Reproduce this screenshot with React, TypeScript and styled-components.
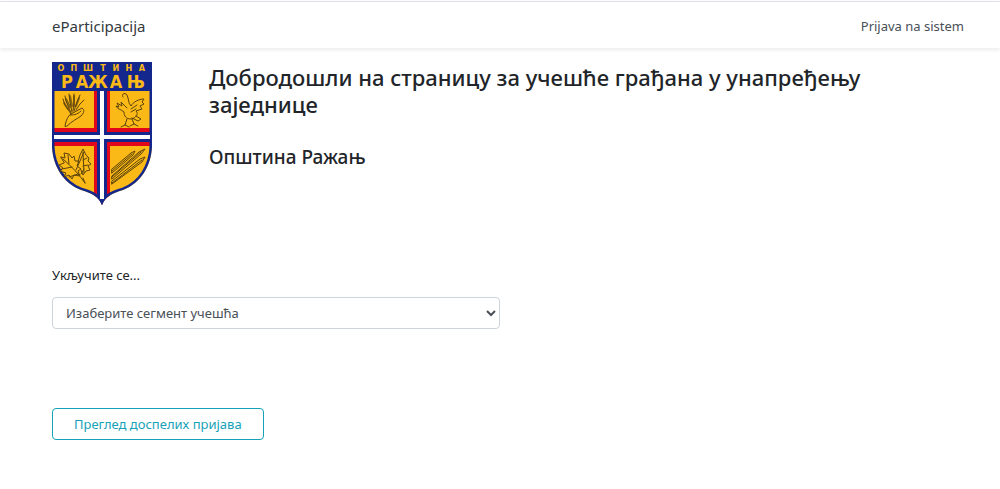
import React from "react";
import styled, { createGlobalStyle } from "styled-components";

const GlobalStyle = createGlobalStyle`
  *, *::before, *::after { box-sizing: border-box; }
  body {
    margin: 0;
    background: #fff;
    color: #212529;
    font-family: "Noto Sans", "Open Sans", sans-serif;
    font-size: 13px;
    line-height: 20px;
  }
`;

const Navbar = styled.header`
  display: flex;
  align-items: center;
  justify-content: space-between;
  height: 47px;
  margin-top: 1px;
  padding: 2px 36px 0 52px;
  border-top: 1px solid #dee2e6;
  box-shadow: 0 2px 4px rgba(0, 0, 0, 0.08);
`;

const Brand = styled.a`
  color: #343a40;
  font-size: 15px;
  text-decoration: none;
`;

const NavLink = styled.a`
  color: #495057;
  text-decoration: none;
`;

const Main = styled.main`
  padding: 14px 52px 48px;
`;

const Intro = styled.section`
  display: grid;
  grid-template-columns: 100px minmax(0, 680px);
  column-gap: 57px;
`;

const Crest = styled.svg`
  display: block;
  width: 100px;
  height: 144px;
`;

const Title = styled.h1`
  margin: 2px 0 28px;
  font-size: 22px;
  font-weight: 500;
  line-height: 27px;
`;

const Subtitle = styled.h2`
  margin: 0;
  font-size: 19px;
  font-weight: 500;
  line-height: 22px;
`;

const Form = styled.form`
  display: flex;
  flex-direction: column;
  align-items: flex-start;
  margin-top: 59px;
`;

const Label = styled.label`
  margin-bottom: 12px;
`;

const Select = styled.select`
  width: 50%;
  height: 32px;
  padding: 0 9px;
  border: 1px solid #ced4da;
  border-radius: 4px;
  background: #fff;
  color: #495057;
  font: inherit;
`;

const OutlineButton = styled.button`
  height: 32px;
  margin-top: 79px;
  padding: 0 21px;
  border: 1px solid #17a2b8;
  border-radius: 4px;
  background: transparent;
  color: #17a2b8;
  font: inherit;
`;

const shield =
  "M0 0H100V85C99 104 89 121 71 128C62 131 54 133 50 143C46 133 38 131 29 128C11 121 1 104 0 85Z";

function CoatOfArms() {
  return (
    <Crest viewBox="0 0 100 144" role="img" aria-label="Грб општине Ражањ">
      <clipPath id="shield">
        <path d={shield} />
      </clipPath>
      <g clipPath="url(#shield)">
        <path fill="#fbb917" d="M0 0H100V144H0Z" />
        <path fill="#e2061a" d="M42 28H58V144H42ZM0 66H100V84H0Z" />
        <path fill="#14278c" d="M45 28H55V144H45ZM0 70H100V80H0ZM0 0H100V29H0Z" />
        <path d={shield} fill="none" stroke="#14278c" strokeWidth="5" />
        <path fill="#fff" d="M48 29H52V137H48ZM2 73H98V77H2Z" />
      </g>
      <g fill="#fbb917" fontFamily="Liberation Sans Narrow, DejaVu Sans Condensed, sans-serif" fontWeight="700" textAnchor="middle">
        <text fontSize="9" x="9 22 36 51 64 77 90" y="9">ОПШТИНА</text>
        <text fontSize="18" x="15 30 46 64 84" y="26">РАЖАЊ</text>
      </g>
      <g fill="none" stroke="#5b430b" strokeWidth="1" strokeLinecap="round" strokeLinejoin="round">
        {/* Wheat sheaf */}
        <path d="M13 64C14 58 16 54 19 52L30 46C33 48 32 51 29 54C25 57 20 59 15 64ZM18 53C21 53 25 53 29 49M19 52L13 43L11 37M19 51L14 39L13 34M20 50L18 40L17 32M21 49L22 40L22 32M22 49L25 40L28 33M24 48L28 42L32 38" />
        <path strokeWidth="2" opacity="0.7" d="M12 41L16 47M14 37L18 45M18 34L20 44M22 34L22 44M27 36L24 44" />
        {/* Bird */}
        <path d="M71 35C69 32 73 30 75 33C77 37 76 41 79 44C81 40 87 37 92 37L90 40L92 42L88 44L90 47L84 49C87 52 84 56 79 57C74 57 72 54 72 50C69 47 66 48 64 44L67 45L65 41L70 44L69 40L75 46M75 57L73 63L69 65M73 63L77 65M80 57L82 62L86 64M82 62L78 64M84 54L89 57L86 59L80 56M79 47L85 43M79 50L84 47" />
        {/* Leaves */}
        <path d="M33 121C27 112 20 105 11 97M24 108L32 90M20 105L10 107M17 102L16 93M26 112L17 115M29 112L32 107M33 121L31 116M9 95L13 96L12 91L17 92L20 96L22 94L23 99L27 99L25 104L29 107L26 109L28 114L22 113L20 117L17 113L12 115L14 111L8 109L11 106L7 103L12 101ZM26 100L28 93L31 87L34 93L37 96L36 99L39 102L36 104L38 108L34 109L31 113L29 108M31 90L32 111M31 98L35 96M31 104L36 103" />
        {/* Awls */}
        <path d="M60 107L79 91L83 89L81 93L60 111ZM60 114L87 90L93 87L89 92L60 117ZM60 119L88 97L93 95L90 100L60 122ZM60 109L80 92M60 115L89 90M60 121L90 98" />
      </g>
    </Crest>
  );
}

export default function App() {
  return (
    <>
      <GlobalStyle />
      <Navbar>
        <Brand href="#">eParticipacija</Brand>
        <NavLink href="#">Prijava na sistem</NavLink>
      </Navbar>
      <Main>
        <Intro>
          <CoatOfArms />
          <div>
            <Title>Добродошли на страницу за учешће грађана у унапређењу заједнице</Title>
            <Subtitle>Општина Ражањ</Subtitle>
          </div>
        </Intro>
        <Form>
          <Label htmlFor="segment">Укључите се...</Label>
          <Select id="segment">
            <option>Изаберите сегмент учешћа</option>
          </Select>
          <OutlineButton type="button">Преглед доспелих пријава</OutlineButton>
        </Form>
      </Main>
    </>
  );
}
